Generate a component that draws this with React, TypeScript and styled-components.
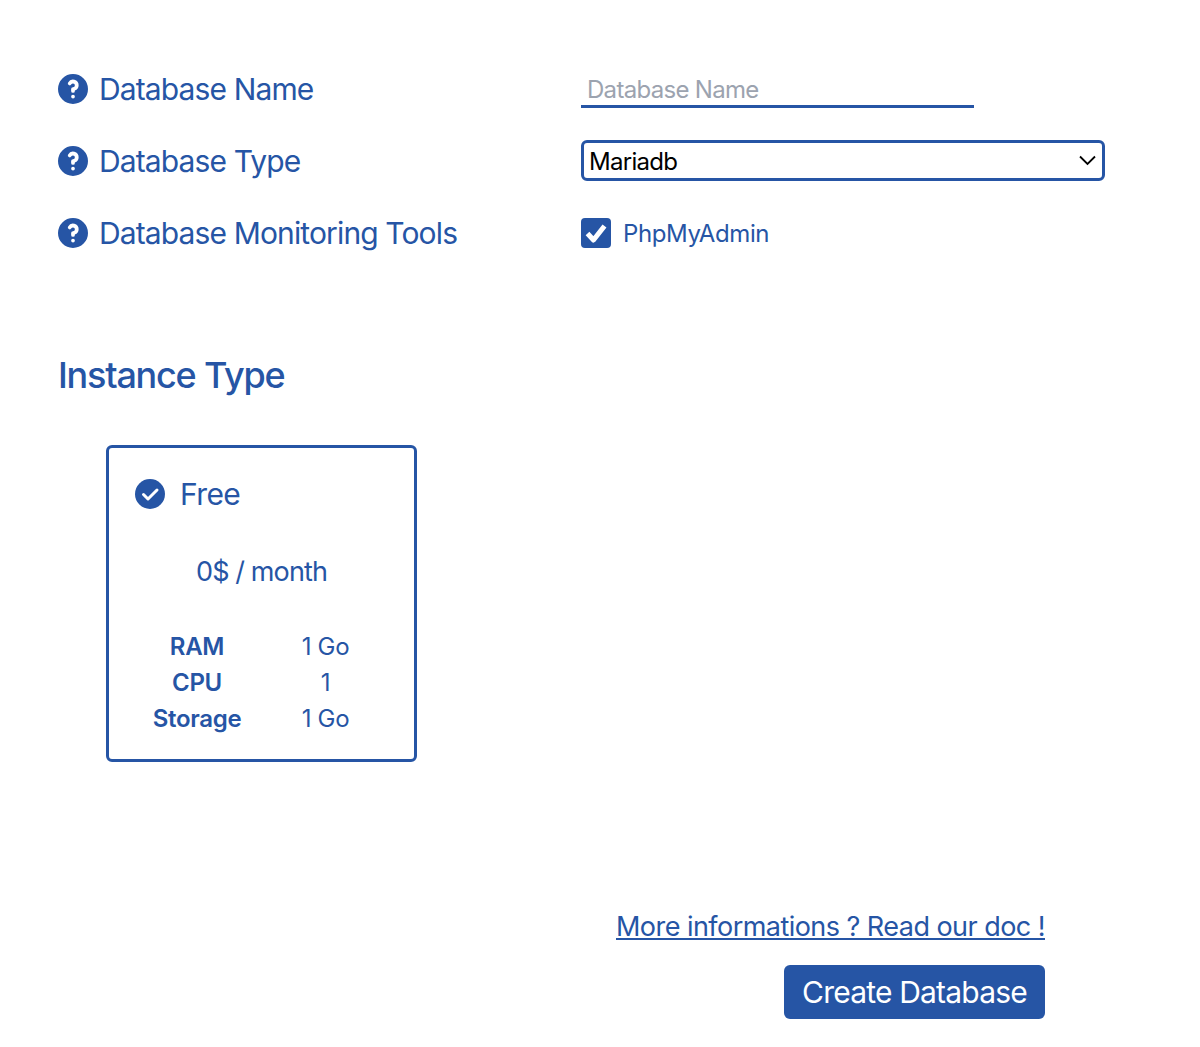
import React from "react";
import styled, { createGlobalStyle } from "styled-components";

const BLUE = "#2655a5";

const GlobalStyle = createGlobalStyle`
  html, body {
    margin: 0;
    padding: 0;
    background: #ffffff;
    font-family: Inter, "Noto Sans", sans-serif;
    color: ${BLUE};
  }
  * {
    box-sizing: border-box;
  }
`;

const Page = styled.div`
  width: 1200px;
  height: 1047px;
  padding: 71px 95px 0 58px;
  overflow: hidden;
`;

const FormGrid = styled.div`
  display: grid;
  grid-template-columns: 523px 1fr;
  grid-auto-rows: 36px;
  row-gap: 36px;
  align-items: center;
`;

const FieldLabel = styled.label`
  display: flex;
  align-items: center;
  gap: 11px;
  font-size: 30px;
  line-height: 36px;
  letter-spacing: -0.029em;
`;

const NameInput = styled.input`
  display: block;
  width: 393px;
  height: 36px;
  margin-top: 2px;
  padding: 1px 6px 0;
  border: 0;
  border-bottom: 3px solid ${BLUE};
  outline: none;
  background: transparent;
  font-family: inherit;
  font-size: 24px;
  letter-spacing: -0.029em;
  color: ${BLUE};
  &::placeholder {
    color: #9ca3af;
    opacity: 1;
  }
`;

const SelectWrap = styled.div`
  position: relative;
  width: 524px;
  height: 41px;
  margin-bottom: 1px;
`;

const TypeSelect = styled.select`
  display: block;
  width: 100%;
  height: 100%;
  padding: 2px 40px 0 5px;
  border: 3px solid ${BLUE};
  border-radius: 6px;
  background: #ffffff;
  appearance: none;
  outline: none;
  font-family: inherit;
  font-size: 24px;
  letter-spacing: -0.03em;
  color: #000000;
`;

const Chevron = styled.svg`
  position: absolute;
  top: 13px;
  right: 8px;
  width: 18px;
  height: 14px;
  pointer-events: none;
`;

const CheckRow = styled.div`
  display: flex;
  align-items: center;
  gap: 12px;
  font-size: 24px;
  letter-spacing: -0.017em;
`;

const CheckBox = styled.span`
  display: flex;
  align-items: center;
  justify-content: center;
  width: 30px;
  height: 30px;
  border-radius: 4px;
  background: ${BLUE};
`;

const SectionTitle = styled.h2`
  margin: 104px 0 0;
  font-size: 36px;
  line-height: 40px;
  font-weight: 500;
  letter-spacing: -0.034em;
`;

const PlanCard = styled.div`
  width: 311px;
  height: 317px;
  margin: 50px 0 0 48px;
  padding: 28px 26px 0;
  border: 3px solid ${BLUE};
  border-radius: 6px;
`;

const PlanHeader = styled.div`
  display: flex;
  align-items: center;
  gap: 15px;
  font-size: 30px;
  line-height: 36px;
  letter-spacing: -0.02em;
`;

const PlanPrice = styled.div`
  margin-top: 42px;
  font-size: 27px;
  line-height: 36px;
  letter-spacing: -0.033em;
  text-align: center;
`;

const SpecGrid = styled.div`
  display: grid;
  grid-template-columns: 122px 135px;
  grid-auto-rows: 36px;
  margin: 38px 0 0 1px;
  align-items: center;
  font-size: 24px;
  letter-spacing: -0.012em;
  text-align: center;
`;

const SpecName = styled.div`
  font-weight: 600;
`;

const SpecValue = styled.div``;

const Footer = styled.div`
  display: flex;
  flex-direction: column;
  align-items: flex-end;
  margin: 147px 60px 0 0;
`;

const DocLink = styled.a`
  font-size: 27px;
  line-height: 36px;
  letter-spacing: -0.02em;
  color: ${BLUE};
  text-decoration: underline;
`;

const CreateButton = styled.button`
  width: 261px;
  height: 54px;
  margin-top: 20px;
  border: 0;
  border-radius: 6px;
  background: ${BLUE};
  color: #ffffff;
  font-family: inherit;
  font-size: 30px;
  letter-spacing: -0.027em;
`;

const HelpIcon = () => (
  <svg width="30" height="30" viewBox="0 0 20 20" fill={BLUE}>
    <path
      fillRule="evenodd"
      clipRule="evenodd"
      d="M18 10a8 8 0 1 1-16 0 8 8 0 0 1 16 0zm-8-3a1 1 0 0 0-.867.5 1 1 0 1 1-1.731-1A3 3 0 0 1 13 8a3.001 3.001 0 0 1-2 2.83V11a1 1 0 1 1-2 0v-1a1 1 0 0 1 1-1 1 1 0 1 0 0-2zm0 8a1 1 0 1 0 0-2 1 1 0 0 0 0 2z"
      transform="translate(10 10) scale(1.25) translate(-10 -10)"
    />
  </svg>
);

const CheckCircleIcon = () => (
  <svg width="30" height="30" viewBox="0 0 30 30">
    <circle cx="15" cy="15" r="15" fill={BLUE} />
    <path d="M8.5 15.5l4.5 4.5 9-9" fill="none" stroke="#fff" strokeWidth="3" strokeLinecap="round" strokeLinejoin="round" />
  </svg>
);

const specs = [
  { name: "RAM", value: "1 Go" },
  { name: "CPU", value: "1" },
  { name: "Storage", value: "1 Go" },
];

export default function App() {
  return (
    <Page>
      <GlobalStyle />
      <FormGrid>
        <FieldLabel>
          <HelpIcon />
          Database Name
        </FieldLabel>
        <NameInput placeholder="Database Name" />

        <FieldLabel>
          <HelpIcon />
          Database Type
        </FieldLabel>
        <SelectWrap>
          <TypeSelect defaultValue="mariadb">
            <option value="mariadb">Mariadb</option>
          </TypeSelect>
          <Chevron viewBox="0 0 18 14">
            <path d="M1 3.5l7.5 7.5 7.5-7.5" fill="none" stroke="#000" strokeWidth="1.8" />
          </Chevron>
        </SelectWrap>

        <FieldLabel>
          <HelpIcon />
          Database Monitoring Tools
        </FieldLabel>
        <CheckRow>
          <CheckBox>
            <svg width="30" height="30" viewBox="0 0 30 30">
              <path d="M6.5 15.5l6 6.5 11-14" fill="none" stroke="#fff" strokeWidth="5" strokeLinejoin="round" />
            </svg>
          </CheckBox>
          PhpMyAdmin
        </CheckRow>
      </FormGrid>

      <SectionTitle>Instance Type</SectionTitle>

      <PlanCard>
        <PlanHeader>
          <CheckCircleIcon />
          Free
        </PlanHeader>
        <PlanPrice>0$ / month</PlanPrice>
        <SpecGrid>
          {specs.map((spec) => (
            <React.Fragment key={spec.name}>
              <SpecName>{spec.name}</SpecName>
              <SpecValue>{spec.value}</SpecValue>
            </React.Fragment>
          ))}
        </SpecGrid>
      </PlanCard>

      <Footer>
        <DocLink href="#">More informations ? Read our doc !</DocLink>
        <CreateButton>Create Database</CreateButton>
      </Footer>
    </Page>
  );
}
